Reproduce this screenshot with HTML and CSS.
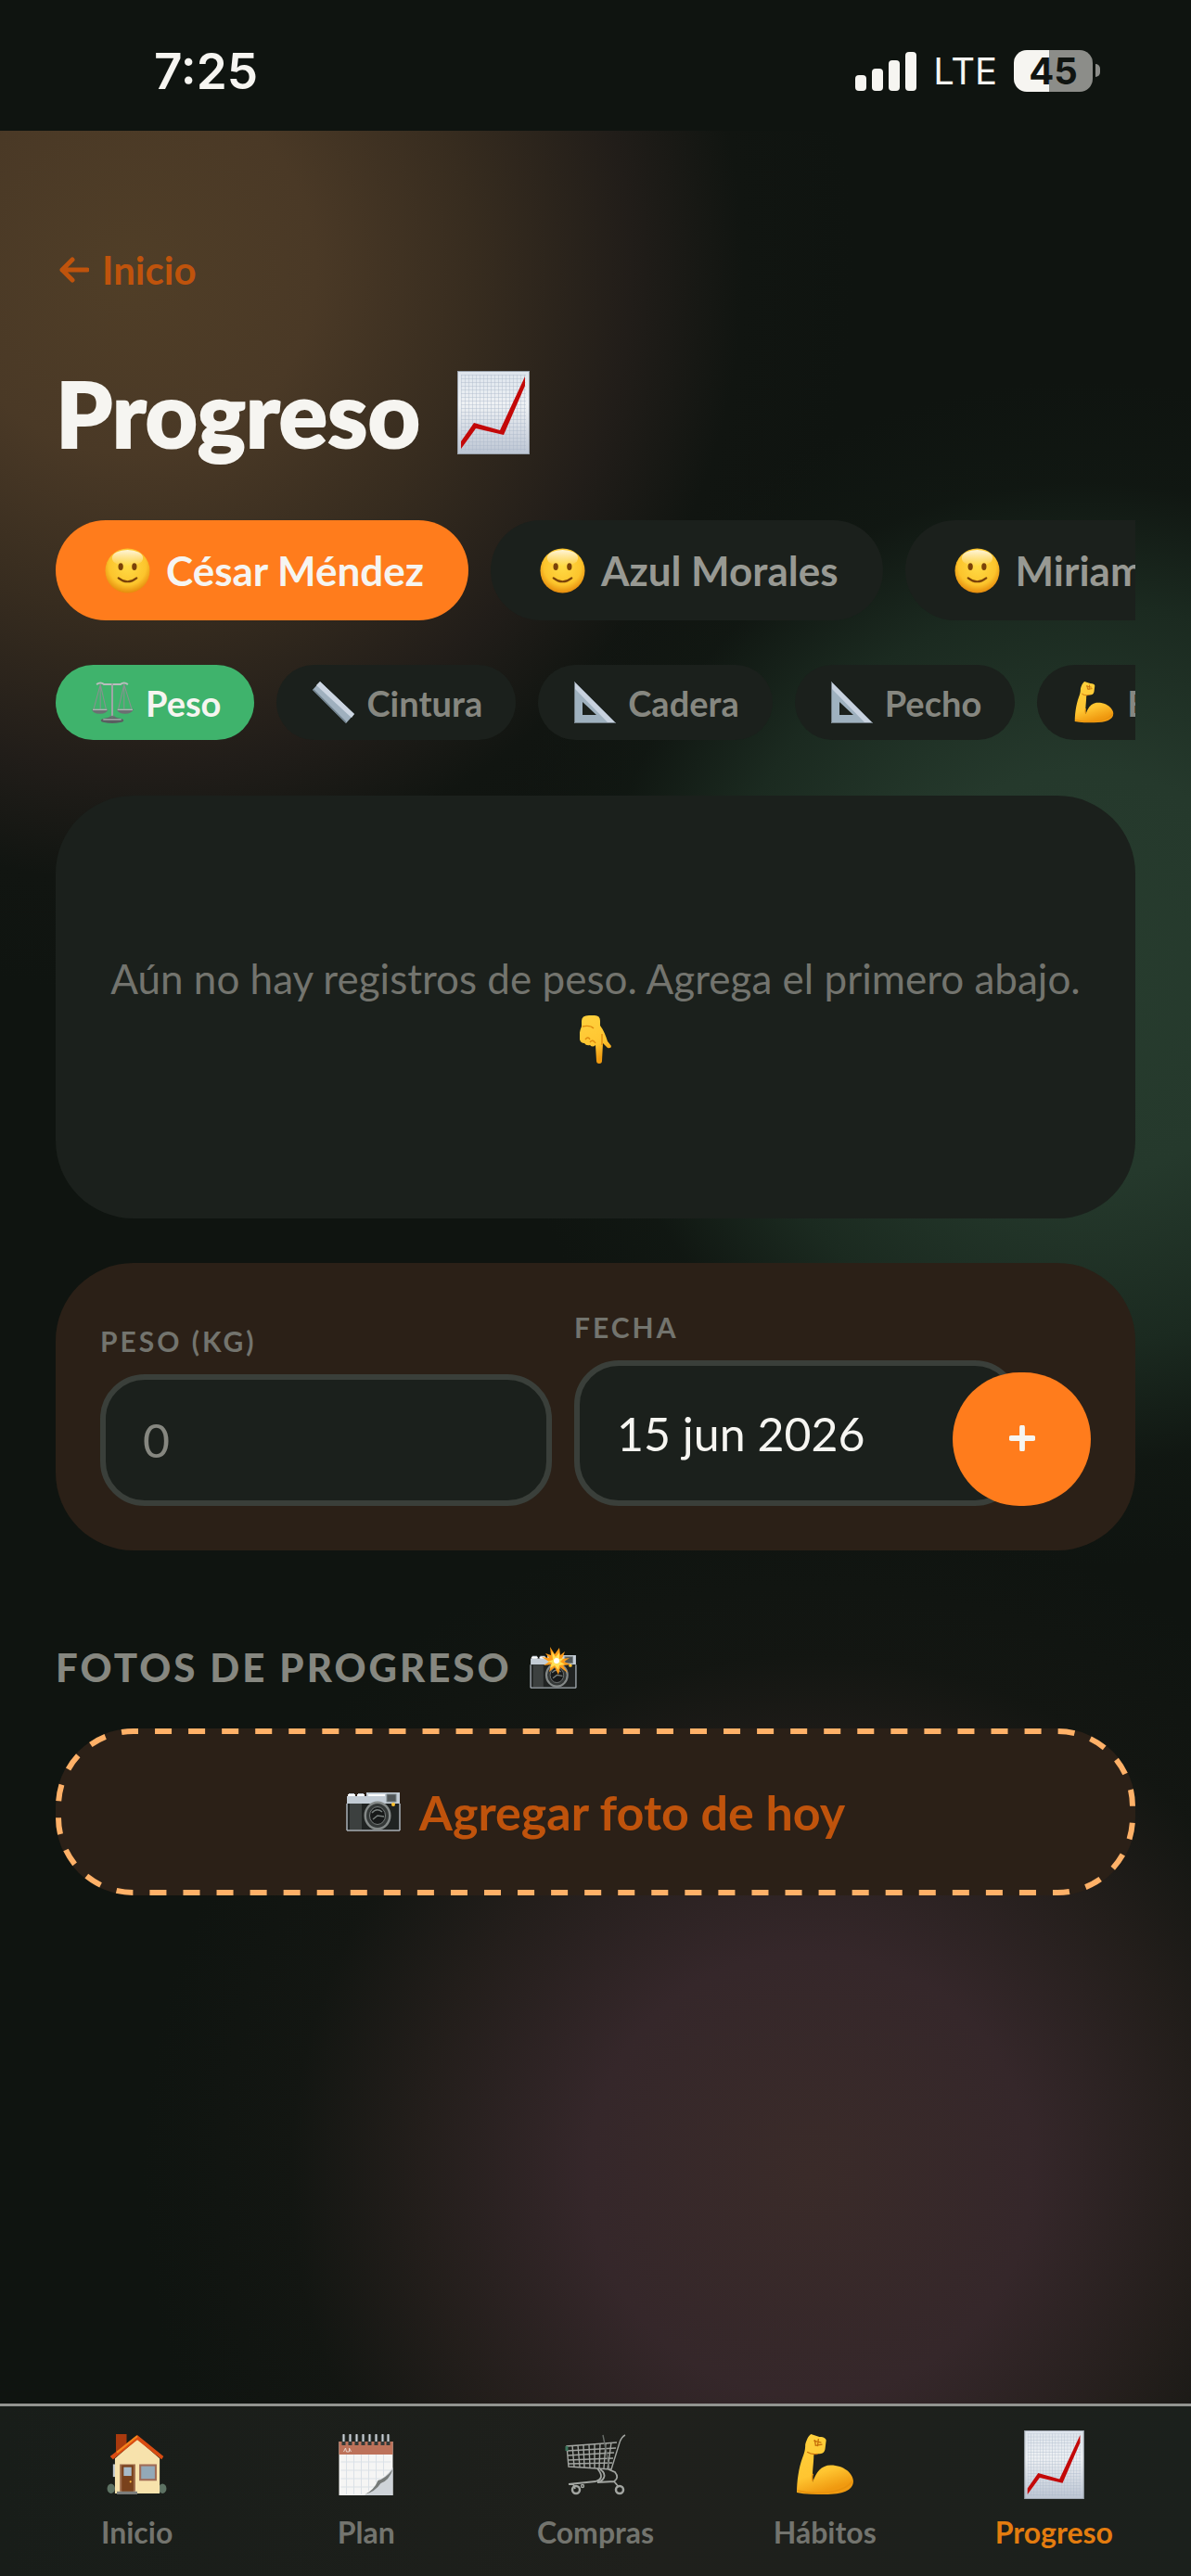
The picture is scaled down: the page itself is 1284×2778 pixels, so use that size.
FILE: index.html
```html
<!DOCTYPE html>
<html lang="es">
<head>
    <meta charset="UTF-8">
    <meta name="viewport" content="width=device-width, initial-scale=1.0">
    <title>Progreso</title>
    <link rel="stylesheet" href="styles.css">
</head>
<body>
    <!-- Icon sprite -->
    <svg class="sprite" aria-hidden="true">
        <defs>
            <linearGradient id="paper" x1="0" y1="0" x2="0" y2="1">
                <stop offset="0" stop-color="#dde4ec"/>
                <stop offset="0.4" stop-color="#eef1f4"/>
                <stop offset="1" stop-color="#bcc5d3"/>
            </linearGradient>
            <linearGradient id="skin" x1="0" y1="0" x2="0.3" y2="1">
                <stop offset="0" stop-color="#ffd23e"/>
                <stop offset="0.7" stop-color="#ffc531"/>
                <stop offset="1" stop-color="#f09a10"/>
            </linearGradient>
            <radialGradient id="faceFill" cx="0.5" cy="0.4" r="0.6">
                <stop offset="0" stop-color="#ffdb45"/>
                <stop offset="0.7" stop-color="#fcc42c"/>
                <stop offset="1" stop-color="#e58a0c"/>
            </radialGradient>
            <linearGradient id="shine" x1="0" y1="0" x2="0" y2="1">
                <stop offset="0" stop-color="#fff6d8"/>
                <stop offset="1" stop-color="#fff6d8" stop-opacity="0"/>
            </linearGradient>
            <pattern id="grid" width="4" height="4" patternUnits="userSpaceOnUse">
                <path d="M0 0H4M0 0V4" stroke="#a9b8c8" stroke-width="0.8" fill="none"/>
            </pattern>
        </defs>
        <symbol id="chart" viewBox="0 0 78 90">
            <rect width="78" height="90" fill="url(#paper)"/>
            <rect x="4" y="4" width="70" height="82" fill="url(#grid)"/>
            <rect x="0.5" y="0.5" width="77" height="89" fill="none" stroke="#98a0aa"/>
            <path d="M4 84v-8L18 56l28 8L73 6v10L50 69l-30-7z" fill="#c30808"/>
        </symbol>
        <symbol id="face" viewBox="0 0 50 50">
            <circle cx="25" cy="25" r="24.5" fill="url(#faceFill)"/>
            <ellipse cx="25" cy="11" rx="17" ry="9" fill="url(#shine)"/>
            <ellipse cx="17.500" cy="20.500" rx="2.700" ry="4" fill="#7a4209"/>
            <ellipse cx="32.500" cy="20.500" rx="2.700" ry="4" fill="#7a4209"/>
            <path d="M15 33q10 8 20 0" fill="none" stroke="#7a4209" stroke-width="2.200" stroke-linecap="round"/>
        </symbol>
        <symbol id="scale" viewBox="0 0 44 44">
            <g fill="none" stroke="#8b9091" stroke-width="1">
                <path d="M9 3 2 29M9 3l6 26M9 3v26M34 3l-6 26M34 3l8 26M34 3v26"/>
                <path d="M5 3q4-3 8 0h17q4-3 8 0" stroke="#b9bdbd" stroke-width="2"/>
                <path d="M21.500 2v36" stroke="#a0a5a6" stroke-width="2"/>
            </g>
            <path d="M0 29h17q-1 5-8.500 5T0 29zM26 29h18q-2 5-9 5t-9-5z" fill="#6b7072"/>
            <path d="M1 29.500h15M27 29.500h16" stroke="#c8cccc"/>
            <path d="M17 38q5-4 9 0z" fill="#6d7274"/>
            <ellipse cx="21.500" cy="41" rx="12" ry="3" fill="#595e60"/>
            <path d="M12 40h19" stroke="#c8cccc"/>
        </symbol>
        <symbol id="ruler" viewBox="0 0 45 45">
            <path d="M0 9 8 0l37 35-9 10z" fill="#9fb0be"/>
            <path d="M8 0l37 35-3 4L4 4z" fill="#cdd6e2"/>
            <path d="M0 9 36 45v-2L1 8z" fill="#70808c"/>
        </symbol>
        <symbol id="square" viewBox="0 0 45 45">
            <path fill-rule="evenodd" d="M0 0l45 45H0zM9 22v14h15z" fill="#9fb1bf"/>
            <path d="M1 1l44 44h-8L1 8z" fill="#c8d2df"/>
            <path d="M.5 0v44.500H45" fill="none" stroke="#727d84"/>
        </symbol>
        <symbol id="arm" viewBox="0 0 60 65">
            <path d="M15 0l9 3c5 0 8 2 7 5l-1 8c-1 4-3 5-7 5l-5 1c0 9-2 19-1 29 3-10 9-18 19-18 14 0 24 9 24 17 0 10-12 14-30 14-10 0-21 0-30-2C0 50 2 36 6 25c2-5 3-8 3-14 1-4 3-9 6-11z" fill="url(#skin)"/>
            <path d="M17 50c-1-3-1-5 0-8M1 60c12 3 26 3 37 1 10-2 17-5 21-11" fill="none" stroke="#e8920e" stroke-width="1.500"/>
            <path d="M18 7l8 2M19 6l1 6 7-1M23 5l-1 8M11 19c3 2 6 3 11 2" fill="none" stroke="#c66f0a" stroke-width="1.300"/>
        </symbol>
        <symbol id="hand" viewBox="0 0 34 52">
            <path d="M2 6Q2 0 10 0h6q6 0 6 6v5c4 5 6 11 8 17l4 5q0 3-4 2l-5-5-1 19q0 3-3 3t-3-3l-1-17q-3 3-6 0-4 1-6-2-4 0-5-4Q-1 18 2 12z" fill="url(#skin)"/>
            <path d="M6 26q3-4 5 0M11 29q3-4 6 1M3 12q8-2 12 2M24 20v12" fill="none" stroke="#e08b10" stroke-width="1.400"/>
        </symbol>
        <symbol id="camera" viewBox="0 0 59 42">
            <path d="M3 1h6v3h4V1h6v3h3V0h36v12H1V4h2z" fill="#c3ccd5"/>
            <path d="M2 3h8M12 3h8M24 3h18" stroke="#fff" stroke-width="2"/>
            <rect x="1" y="12" width="57" height="28" fill="#202322"/>
            <path d="M4 12h13v28H4z" fill="#3c403f"/>
            <path d="M1 41h57M1 12v29M58 12v29" stroke="#a8b0b8" stroke-width="1.500"/>
            <rect x="44" y="2" width="10" height="8" fill="#505658" stroke="#7b8487"/>
            <circle cx="51" cy="13" r="2" fill="#ffc22d"/>
            <ellipse cx="34" cy="25" rx="14.500" ry="15.500" fill="#848988"/>
            <ellipse cx="34" cy="25" rx="12" ry="13" fill="#343837"/>
            <ellipse cx="34" cy="25" rx="8.500" ry="9.500" fill="#171919" stroke="#777c7b"/>
            <path d="M28 22q5-6 11-1M29 29l5-4 7 1" fill="none" stroke="#79807e" stroke-width="1.500"/>
        </symbol>
        <symbol id="flash" viewBox="0 0 53 45">
            <use href="#camera" x="0" y="9" width="53" height="36"/>
            <path d="M23 0l5 8 5-7 1 8 5-4-3 8 8-1-6 4 7 3-8 1 5 8-8-6-2 8-4-8-6 5 2-8-8 1 6-4-8-5 8 1-4-5 6 2z" fill="#ff9b18"/>
            <path d="M25 5l4 6 4-5v7l5-1-4 4 5 3-6 1-1 5-4-5-5 3 2-6-5-1 6-2z" fill="#ffdf55"/>
            <circle cx="30" cy="15" r="3" fill="#fff"/>
        </symbol>
        <symbol id="house" viewBox="0 0 61 63">
            <path d="M9 0h11v11L9 22z" fill="#a93a0e"/>
            <ellipse cx="4" cy="56" rx="4" ry="5" fill="#5d7263"/>
            <ellipse cx="57" cy="56" rx="4" ry="5" fill="#5d7263"/>
            <path d="M6 31h4v13H6z" fill="#c4ccd1"/>
            <path d="M8 25 31 5l23 20v36H8z" fill="#f7e2ac"/>
            <path d="M31 1 58 23l-2 3L31 6 6 26l-3-3z" fill="#d94c12"/>
            <path d="M31 2 10 19" stroke="#f5861d" stroke-width="2"/>
            <path d="M13 31h16v28H13z" fill="#9b6a4b"/>
            <path d="M15 32h12v27H15z" fill="#79411c"/>
            <rect x="17" y="34" width="8" height="9" fill="#a7bac8"/>
            <circle cx="24" cy="49" r="1" fill="#ffbd42"/>
            <rect x="34" y="32" width="16" height="15" fill="#93a9b8" stroke="#a06c57" stroke-width="2"/>
            <path d="M10 59h21v3H10z" fill="#7d7f7d"/>
        </symbol>
        <symbol id="calendar" viewBox="0 0 58 66">
            <rect y="8" width="58" height="58" fill="#f5f5f4"/>
            <rect y="8" width="58" height="14" fill="#bd725a"/>
            <path d="M5 19l2-4 1 4h3v-4l2 4" fill="none" stroke="#e8d2c9"/>
            <path d="M2 30h54M2 39h54M2 48h46M2 57h37M8 22v43M16 22v43M24 22v43M32 22v39M40 22v30M48 22v23" stroke="#dbe1e7"/>
            <path d="M27 66q10-3 15-16 8-3 16-14v30z" fill="#cfd4d9"/>
            <path d="M28 65q10-5 14-15 8-2 16-12-4 12-13 15-6 9-17 12z" fill="#777b79"/>
            <path d="M5 1v11M12 1v11M19 1v11M26 1v11M33 1v11M40 1v11M47 1v11M53 1v11" stroke="#343a38" stroke-width="4"/>
            <path d="M5 0v8M12 0v8M19 0v8M26 0v8M33 0v8M40 0v8M47 0v8M53 0v8" stroke="#c9d0d5" stroke-width="2"/>
        </symbol>
        <symbol id="cart" viewBox="0 0 65 66">
            <g fill="none" stroke="#a2a5a1" stroke-width="1.400">
                <path d="M64 1q-4 2-6 8l-9 29-46-3L1 13l54-4M1 18l53-3M2 23l50-3M2 28l49-2M3 32l47-1"/>
                <path d="M7 12l2 23M13 12l2 23M19 12l1 24M25 11l1 26M31 11v26M37 10l-1 27M43 10l-2 27M49 9l-4 29"/>
                <path d="M40 1l4 20 3 17" stroke="#686d69"/>
                <path d="M34 37q9 11-2 14L3 54M37 38q6 4 4 9-2 4-7 5l18-1q6-4 1-10l-7-3M52 51l5 6M8 54l2 5" stroke-width="1.800"/>
                <path d="M1 13v5" stroke="#3b765c" stroke-width="3"/>
                <circle cx="11" cy="60" r="4" stroke-width="2.500"/>
                <circle cx="58" cy="60" r="4" stroke-width="2.500"/>
                <circle cx="18" cy="56" r="1.500"/>
            </g>
        </symbol>
    </svg>

    <div class="status-bar">
        <span class="time">7:25</span>
        <div class="status-icons">
            <svg class="signal" viewBox="0 0 66 42" aria-hidden="true">
                <rect x="0" y="25" width="12" height="17" rx="4"/>
                <rect x="18" y="18" width="12" height="24" rx="4"/>
                <rect x="36" y="9" width="12" height="33" rx="4"/>
                <rect x="54" y="0" width="12" height="42" rx="4"/>
            </svg>
            <span class="network">LTE</span>
            <div class="battery"><span class="level">45</span></div>
        </div>
    </div>

    <main class="page">
        <a class="back" href="#inicio">
            <svg class="arrow" viewBox="0 0 32 28" aria-hidden="true"><path d="M30 14H3M14 3 3 14l11 11"/></svg>
            Inicio
        </a>
        <h1>Progreso <svg class="title-icon"><use href="#chart"/></svg></h1>

        <div class="row people">
            <button class="chip person active"><svg><use href="#face"/></svg>César Méndez</button>
            <button class="chip person"><svg><use href="#face"/></svg>Azul Morales</button>
            <button class="chip person"><svg><use href="#face"/></svg>Miriam</button>
        </div>

        <div class="row metrics">
            <button class="chip metric active"><svg><use href="#scale"/></svg>Peso</button>
            <button class="chip metric"><svg><use href="#ruler"/></svg>Cintura</button>
            <button class="chip metric"><svg><use href="#square"/></svg>Cadera</button>
            <button class="chip metric"><svg><use href="#square"/></svg>Pecho</button>
            <button class="chip metric"><svg><use href="#arm"/></svg>Brazo</button>
        </div>

        <section class="card empty">
            <p>Aún no hay registros de peso. Agrega el primero abajo.<br><svg class="hand"><use href="#hand"/></svg></p>
        </section>

        <form class="card entry">
            <div class="field">
                <label for="weight">PESO (KG)</label>
                <input id="weight" type="text" inputmode="decimal" placeholder="0">
            </div>
            <div class="field date">
                <label for="date">FECHA</label>
                <input id="date" type="text" value="15 jun 2026">
            </div>
            <button class="add" type="button" aria-label="Agregar">
                <svg viewBox="0 0 24 24"><path d="M12 2v20M2 12h20"/></svg>
            </button>
        </form>

        <h2>FOTOS DE PROGRESO <svg class="flash"><use href="#flash"/></svg></h2>
        <button class="add-photo">
            <svg class="dashes" aria-hidden="true"><rect width="100%" height="100%" rx="81" pathLength="2520"/></svg>
            <svg class="camera"><use href="#camera"/></svg>
            Agregar foto de hoy
        </button>
    </main>

    <nav class="tabs">
        <a href="#inicio"><svg><use href="#house"/></svg>Inicio</a>
        <a href="#plan"><svg><use href="#calendar"/></svg>Plan</a>
        <a href="#compras"><svg><use href="#cart"/></svg>Compras</a>
        <a href="#habitos"><svg><use href="#arm"/></svg>Hábitos</a>
        <a class="active" href="#progreso"><svg class="big"><use href="#chart"/></svg>Progreso</a>
    </nav>
</body>
</html>
```

FILE: styles.css
```css
* {
    box-sizing: border-box;
}
body {
    margin: 0;
    min-height: 100vh;
    display: flex;
    flex-direction: column;
    font-family: Lato, sans-serif;
    font-size: 44px;
    color: #f6f5f1;
    background-color: #0f1410;
    /* soft colour blobs: amber, green, plum */
    background-image:
        radial-gradient(circle 780px at 11% 290px, #503e27 0, #4a3926 200px, #372c1f 370px, #211d19 540px, #13161280 660px, #0f141000 780px),
        radial-gradient(circle 640px at 91% 1050px, #273c2e 0, #25392c 220px, #1b2a20 400px, #121a1480 530px, #0f141000 640px),
        radial-gradient(circle 720px at 68% 2345px, #3a2b29 0, #35272a 240px, #231e1b 420px, #151713a0 560px, #0f141000 720px);
}
button, input {
    font-family: inherit;
    border: none;
}
button {
    padding: 0;
    cursor: pointer;
}
a {
    text-decoration: none;
}
.sprite {
    position: absolute;
    width: 0;
    height: 0;
}

/* Status bar */
.status-bar {
    display: flex;
    justify-content: space-between;
    align-items: center;
    height: 141px;
    padding: 12px 106px 0 166px;
    background-color: #0f1410;
    font-family: Inter, sans-serif;
}
.time {
    font-size: 53px;
    font-weight: 600;
}
.status-icons {
    display: flex;
    align-items: center;
    gap: 18px;
}
.signal {
    width: 66px;
    height: 42px;
    fill: #f6f5f1;
}
.network {
    font-size: 40px;
    font-weight: 400;
}
.battery {
    position: relative;
    width: 85px;
    height: 45px;
    border-radius: 14px;
    background: linear-gradient(90deg, #f6f5f1 45%, #8c8d89 45%);
    text-align: center;
}
.battery::after {
    content: "";
    position: absolute;
    right: -8px;
    top: 15px;
    width: 5px;
    height: 14px;
    border-radius: 0 6px 6px 0;
    background-color: #8c8d89;
}
.level {
    display: block;
    font-size: 40px;
    font-weight: 700;
    line-height: 45px;
    color: #101411;
}

/* Page */
.page {
    padding: 120px 60px 0;
}
.back {
    display: flex;
    align-items: center;
    gap: 14px;
    line-height: 60px;
    padding-left: 4px;
    font-size: 42px;
    font-weight: 700;
    color: #bf530c;
}
.arrow {
    width: 32px;
    height: 28px;
    fill: none;
    stroke: #bf530c;
    stroke-width: 5;
    stroke-linecap: round;
    stroke-linejoin: round;
}
h1 {
    display: flex;
    align-items: center;
    gap: 40px;
    margin: 70px 0 62px;
    font-size: 98px;
    font-weight: 900;
    line-height: 108px;
    -webkit-text-stroke: 2px #f6f5f1;
}
.title-icon {
    width: 78px;
    height: 90px;
}

/* Chips */
.row {
    display: flex;
    gap: 24px;
    overflow: hidden;
}
.chip {
    display: flex;
    flex-shrink: 0;
    align-items: center;
    border-radius: 54px;
    background-color: #1b201c;
    font-weight: 700;
    white-space: nowrap;
}
.person {
    height: 108px;
    gap: 17px;
    padding: 0 48px 0 53px;
    font-size: 44px;
    color: #989993;
}
.person svg {
    width: 49px;
    height: 49px;
}
.person.active {
    background-color: #ff7c1c;
    color: #f6f5f1;
}
.metrics {
    margin: 48px 0 60px;
}
.metric {
    height: 81px;
    gap: 13px;
    padding: 0 36px 0 39px;
    font-size: 38px;
    color: #868780;
}
.metric svg {
    width: 45px;
    height: 45px;
}
.metric.active {
    background-color: #3fb36c;
    color: #f6f5f1;
}

/* Cards */
.card {
    border-radius: 84px;
}
.empty {
    display: flex;
    align-items: center;
    justify-content: center;
    min-height: 456px;
    padding: 48px;
    background-color: #1b201c;
    color: #73746e;
    text-align: center;
}
.empty p {
    margin: 0;
    line-height: 60px;
}
.hand {
    width: 34px;
    height: 52px;
    vertical-align: middle;
}
.entry {
    display: grid;
    grid-template-columns: 487fr 384fr 149px;
    gap: 24px;
    align-items: end;
    margin-top: 48px;
    padding: 48px;
    background-color: #2b2017;
}
.field {
    display: flex;
    flex-direction: column;
    gap: 15px;
    min-width: 0;
}
.field label {
    font-size: 30px;
    font-weight: 700;
    line-height: 42px;
    letter-spacing: 3px;
    color: #73746e;
}
.field input {
    width: 100%;
    height: 142px;
    padding: 0 40px;
    border: 6px solid #3a3f3a;
    border-radius: 48px;
    background-color: #1b201c;
    font-size: 50px;
    color: #f6f5f1;
}
.field input::placeholder {
    color: #868780;
}
/* the date box runs under the add button */
.date input {
    width: 125%;
    height: 157px;
}
.add {
    position: relative;
    height: 144px;
    border-radius: 72px;
    background-color: #ff7c1c;
}
.add svg {
    width: 28px;
    height: 28px;
    stroke: #f6f5f1;
    stroke-width: 5;
    stroke-linecap: round;
}

/* Photos */
h2 {
    display: flex;
    align-items: center;
    gap: 18px;
    margin: 96px 0 36px;
    font-size: 42px;
    font-weight: 900;
    line-height: 60px;
    letter-spacing: 3px;
    color: #868780;
}
.flash {
    width: 53px;
    height: 45px;
}
.add-photo {
    position: relative;
    display: flex;
    align-items: center;
    justify-content: center;
    gap: 20px;
    width: 100%;
    height: 180px;
    border-radius: 84px;
    background-color: #2b2017;
    font-size: 52px;
    font-weight: 700;
    color: #bf530c;
}
.dashes {
    position: absolute;
    top: 3px;
    left: 3px;
    width: calc(100% - 6px);
    height: calc(100% - 6px);
    overflow: visible;
    fill: none;
    stroke: #ffb168;
    stroke-width: 6;
    stroke-dasharray: 18 18;
    stroke-dashoffset: 13;
}
.camera {
    width: 59px;
    height: 42px;
}

/* Bottom tabs */
.tabs {
    display: flex;
    height: 186px;
    margin-top: auto;
    padding: 26px 24px 0;
    border-top: 3px solid #929490;
    background: linear-gradient(90deg, #181d19, #1f201c 55%, #1b201c);
}
.tabs a {
    flex: 1;
    display: flex;
    flex-direction: column;
    align-items: center;
    gap: 18px;
    font-size: 32px;
    font-weight: 700;
    line-height: 36px;
    color: #73746e;
}
.tabs svg {
    width: 73px;
    height: 66px;
    margin: 4px 0;
}
.tabs .big {
    height: 74px;
    margin: 0;
}
.tabs .active {
    color: #e37c0f;
}
```
